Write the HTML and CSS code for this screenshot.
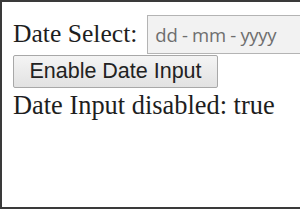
FILE: index.html
```html
<!DOCTYPE html>
<html lang="en">
<head>
  <meta charset="UTF-8" />
  <title>Date Input</title>
  <link rel="stylesheet" href="styles.css">
</head>
<body>
  <div class="frame">
    <div class="row">
      <label for="date-select">Date Select:</label>
      <input id="date-select" class="date-box" type="text" placeholder="dd - mm - yyyy" disabled>
    </div>
    <button id="toggle-btn" class="toggle-btn">Enable Date Input</button>
    <div id="status" class="status">Date Input disabled: true</div>
  </div>

  <script>
    // Toggle the disabled state of the date field
    const dateInput = document.getElementById('date-select');
    const status = document.getElementById('status');
    document.getElementById('toggle-btn').addEventListener('click', () => {
      dateInput.disabled = !dateInput.disabled;
      status.textContent = 'Date Input disabled: ' + dateInput.disabled;
    });
  </script>
</body>
</html>
```

FILE: styles.css
```css
html, body {
  margin: 0;
  padding: 0;
  background-color: #fff;
  overflow: hidden;
}
.frame {
  box-sizing: border-box;
  width: 300px;
  height: 209px;
  border-top: 2px solid #3a3a3a;
  border-left: 2px solid #3a3a3a;
  border-bottom: 2px solid #3a3a3a;
  padding: 12px 0 0 11px;
  overflow: hidden;
  font-family: "Liberation Serif", "Times New Roman", serif;
  font-size: 25.6px;
  color: #1e1e1e;
  white-space: nowrap;
}
.row {
  display: flex;
  align-items: center;
  gap: 10px;
  height: 40px;
}
.date-box {
  box-sizing: border-box;
  flex: none;
  width: 190px;
  height: 39px;
  padding: 0 7px;
  border: 1px solid #b4b4b4;
  background-color: #f2f2f2;
  font-family: "Open Sans", "DejaVu Sans", sans-serif;
  font-size: 18.5px;
  letter-spacing: -0.3px;
  color: #777;
}
.date-box::placeholder {
  color: #6e6e6e;
}
.toggle-btn {
  display: block;
  margin-top: 1px;
  box-sizing: border-box;
  width: 205px;
  height: 33px;
  padding: 0;
  border: 1px solid #a8a8a8;
  border-radius: 2px;
  background: linear-gradient(#f4f4f4, #e2e2e2);
  font-family: "Liberation Sans", Arial, sans-serif;
  font-size: 21.5px;
  color: #222;
}
.status {
  margin-top: 2px;
  line-height: 30px;
  font-size: 26.4px;
}
```
